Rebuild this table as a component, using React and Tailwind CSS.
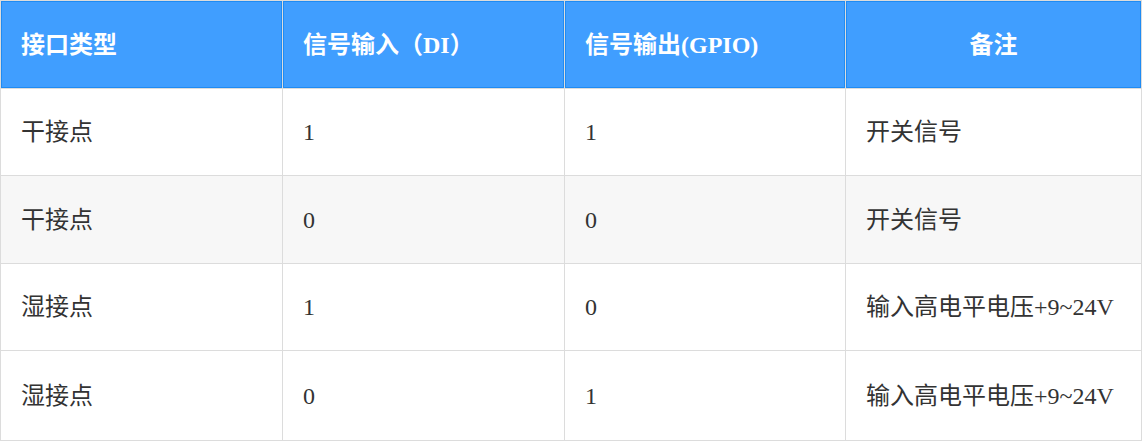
const headers = ["接口类型", "信号输入（DI）", "信号输出(GPIO)", "备注"];

const rows = [
  { type: "干接点", di: "1", gpio: "1", note: "开关信号", striped: false, h: "h-[86px]" },
  { type: "干接点", di: "0", gpio: "0", note: "开关信号", striped: true, h: "h-[87px]" },
  { type: "湿接点", di: "1", gpio: "0", note: "输入高电平电压+9~24V", striped: false, h: "h-[86px]" },
  { type: "湿接点", di: "0", gpio: "1", note: "输入高电平电压+9~24V", striped: false, h: "h-[89px]" },
];

const Cell = ({ children, striped, h }) => (
  <div
    className={`${h} flex items-center pl-[20px] pr-4 text-[24px] text-[#333333] ${
      striped ? "bg-[#f7f7f7]" : "bg-white"
    }`}
  >
    {children}
  </div>
);

export default function App() {
  return (
    <div
      className="w-[1142px] h-[442px] bg-white"
      style={{ fontFamily: '"Liberation Serif", "Noto Sans CJK SC", serif' }}
    >
      <div className="grid grid-cols-[281px_281px_280px_295px] gap-px p-px bg-[#dcdcdc]">
        {headers.map((label, i) => (
          <div
            key={label}
            className={`h-[87px] flex items-center bg-[#409eff] shadow-[inset_0_0_0_1px_#1f8bf3] text-white text-[24px] font-bold ${
              i === 3 ? "justify-center" : "pl-[20px]"
            }`}
          >
            {label}
          </div>
        ))}

        {rows.map((r, idx) => (
          <div key={idx} className="contents">
            <Cell striped={r.striped} h={r.h}>{r.type}</Cell>
            <Cell striped={r.striped} h={r.h}>{r.di}</Cell>
            <Cell striped={r.striped} h={r.h}>{r.gpio}</Cell>
            <Cell striped={r.striped} h={r.h}>{r.note}</Cell>
          </div>
        ))}
      </div>
    </div>
  );
}
